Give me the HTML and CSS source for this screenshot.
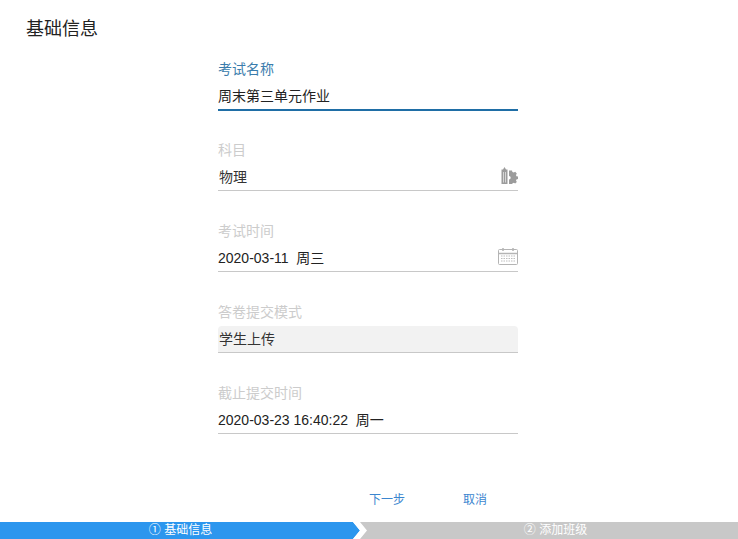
FILE: index.html
```html
<!DOCTYPE html>
<html lang="zh-CN">
<head>
<meta charset="utf-8">
<title>基础信息</title>
<link rel="stylesheet" href="styles.css">
</head>
<body>
<main class="page">
  <h1 class="title">基础信息</h1>
  <form class="form">
    <div class="field active">
      <div class="label">考试名称</div>
      <div class="value">周末第三单元作业</div>
    </div>
    <div class="field">
      <div class="label">科目</div>
      <div class="value inset">物理
        <svg class="icon" width="17" height="17" viewBox="0 0 17 17">
          <path d="M3.5 0 L5 2.5 H6.5 V17 H0.5 V2.5 H2 Z" fill="#9c9c9c"/>
          <path d="M2.5 5 V15.5 M4.5 5 V15.5" stroke="#e4e4e4" stroke-width="0.8"/>
          <path d="M8 3.5 H11 L11.4 5 L12.8 5.6 L14.2 4.8 L15.8 6.6 L15 8 L15.4 9.2 L17 9.6 V12 L15.4 12.4 L15 13.6 L15.8 15 L14.2 16.6 L12.8 15.8 L11.4 16.4 L11 17 H8 V12.4 A1.7 1.7 0 0 0 8 9 Z" fill="#9c9c9c"/>
        </svg>
      </div>
    </div>
    <div class="field">
      <div class="label">考试时间</div>
      <div class="value">2020-03-11&nbsp; 周三
        <svg class="icon" width="20" height="17" viewBox="0 0 20 17">
          <rect x="0.5" y="1.5" width="19" height="15" rx="1" fill="#fff" stroke="#b4b4b4"/>
          <path d="M1 5.5 H19" stroke="#b4b4b4" stroke-width="1.5"/>
          <path d="M5 0 V3 M15 0 V3" stroke="#b4b4b4" stroke-width="1.5"/>
          <path d="M3 8 H17 M3 10.5 H17 M3 13 H17" stroke="#bdbdbd" stroke-dasharray="1.5 1"/>
        </svg>
      </div>
    </div>
    <div class="field">
      <div class="label">答卷提交模式</div>
      <div class="value inset disabled">学生上传</div>
    </div>
    <div class="field">
      <div class="label">截止提交时间</div>
      <div class="value">2020-03-23 16:40:22&nbsp; 周一</div>
    </div>
    <div class="actions">
      <a class="action">下一步</a>
      <a class="action">取消</a>
    </div>
  </form>
  <nav class="steps">
    <div class="step current">① 基础信息</div>
    <svg class="chevron" width="16" height="17" viewBox="0 0 16 17">
      <path d="M0 0 H1 L8 8.5 L1 17 H0 Z" fill="#2c96ee"/>
      <path d="M1 0 H8 L15 8.5 L8 17 H1 L8 8.5 Z" fill="#fff"/>
      <path d="M8 0 H16 V17 H8 L15 8.5 Z" fill="#c8c8c8"/>
    </svg>
    <div class="step next">② 添加班级</div>
  </nav>
</main>
</body>
</html>
```
FILE: styles.css
```css
* { box-sizing: border-box; }
html, body { margin: 0; padding: 0; background: #fff; }
body { font-family: "Liberation Sans", "Noto Sans CJK SC", sans-serif; color: #222; }
.page { width: 738px; height: 539px; display: flex; flex-direction: column; overflow: hidden; }
.title { margin: 0; padding: 17px 0 0 26px; height: 59px; font-size: 18px; line-height: 24px; font-weight: 400; color: #222; }
.form { width: 300px; margin-left: 218px; flex: 1; display: flex; flex-direction: column; }
.field { height: 81px; }
.label { height: 20px; font-size: 14px; line-height: 20px; color: #ccc; }
.value { position: relative; height: 31px; padding-top: 7px; font-size: 14px; line-height: 20px; color: #222; border-bottom: 1px solid #c8c8c8; }
.inset { padding-left: 1px; color: #333; }
.disabled { height: 27px; margin-top: 4px; padding-top: 3px; background: #f2f2f2; border-radius: 4px 4px 0 0; }
.icon { position: absolute; right: 0; top: 7px; }
.active .label { color: #3a7cac; }
.active .value { height: 32px; border-bottom: 2px solid #1f6ea6; }
.actions { display: flex; margin-top: 26px; padding-left: 151px; gap: 58px; }
.action { font-size: 12px; line-height: 20px; color: #3b86cf; }
.steps { display: flex; height: 17px; flex: none; }
.step { flex: 1; text-align: center; font-size: 12px; line-height: 17px; color: #fff; background: #c8c8c8; }
.step.current { flex: none; width: 352px; background: #2c96ee; padding-left: 9px; }
.step.next { padding-left: 5px; }
.chevron { flex: none; }
```
